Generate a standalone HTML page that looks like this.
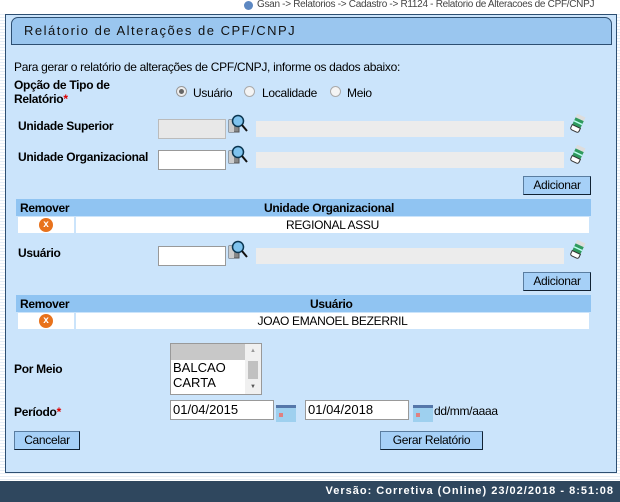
<!DOCTYPE html>
<html><head><meta charset="utf-8"><style>
*{margin:0;padding:0;box-sizing:border-box}
body{width:620px;height:502px;position:relative;overflow:hidden;font-family:"Liberation Sans",Arial,sans-serif;font-size:12px;color:#000;background:#fff repeating-linear-gradient(#fff 0 2px,#e6eef6 2px 3px);}
.a{position:absolute;white-space:nowrap}
.b{font-weight:bold}
.lbl{letter-spacing:-0.3px}
.inp{position:absolute;height:20px;border:1px solid #999;background:#fff}
.ro{position:absolute;height:16px;background:#ececec}
.btn{position:absolute;height:19px;background:#a6d0f7;border:1px solid #5a7da0;border-right-color:#123;border-bottom-color:#123;font-size:12px;text-align:center;line-height:17px;letter-spacing:-0.3px}
.th{position:absolute;background:#90c4f2;height:17px;font-weight:bold;letter-spacing:-0.3px}
.tr{position:absolute;background:#fff;height:16px}
.x{position:absolute;width:14px;height:14px;border-radius:50%;background:#e8721c;color:#fff;font-size:10px;font-weight:bold;text-align:center;line-height:14px}
</style></head><body>
<div class="a" style="left:0;top:0;width:620px;height:12px;background:#fff"></div>
<div class="a" style="left:244px;top:1px;width:9px;height:9px;border-radius:50%;background:#5d88c2"></div>
<div class="a" style="left:257px;top:-1px;font-size:10px;color:#444;letter-spacing:-0.3px">Gsan -&gt; Relatorios -&gt; Cadastro -&gt; R1124 - Relatorio de Alteracoes de CPF/CNPJ</div>
<div class="a" style="left:5px;top:14px;width:612px;height:459px;background:#cbe4fb;border:1px solid #2d4f72"></div>
<div class="a" style="left:11px;top:17px;width:601px;height:28px;background:#9ac6ef;border:1px solid #2d4f72;border-radius:7px 7px 0 0"></div>
<div class="a" style="left:24px;top:23px;font-size:13px;letter-spacing:1.5px;color:#111">Relátorio de Alterações de CPF/CNPJ</div>
<div class="a lbl" style="left:14px;top:60px">Para gerar o relatório de alterações de CPF/CNPJ, informe os dados abaixo:</div>
<div class="a b lbl" style="left:14px;top:78px;line-height:14px">Opção de Tipo de<br>Relatório<span style="color:#d00">*</span></div>
<div class="a" style="left:176px;top:86px;width:11px;height:11px;border-radius:50%;border:1px solid #999;background:#eee"><div style="margin:2px;width:5px;height:5px;border-radius:50%;background:#666"></div></div>
<div class="a lbl" style="left:193px;top:86px">Usuário</div>
<div class="a" style="left:244px;top:86px;width:11px;height:11px;border-radius:50%;border:1px solid #aaa;background:#f4f4f4"></div>
<div class="a lbl" style="left:262px;top:86px">Localidade</div>
<div class="a" style="left:330px;top:86px;width:11px;height:11px;border-radius:50%;border:1px solid #aaa;background:#f4f4f4"></div>
<div class="a lbl" style="left:347px;top:86px">Meio</div>

<svg width="0" height="0" style="position:absolute"><defs>
<g id="mag"><rect x="1" y="6" width="10" height="12" fill="#888" stroke="#555"/><rect x="1" y="6" width="5" height="12" fill="#ccc"/><circle cx="10" cy="7" r="5.5" fill="#7fc3ee" stroke="#0a3550" stroke-width="1.5"/><line x1="14" y1="11" x2="19" y2="17" stroke="#111" stroke-width="2"/></g>
<g id="era"><g transform="rotate(25 9 10)"><rect x="4" y="1" width="9" height="5" fill="#ddd"/><rect x="4" y="5" width="9" height="8" fill="#2f9a5e"/><rect x="4" y="8" width="9" height="1.5" fill="#bfe"/><path d="M4 13h9v3a2 2 0 0 1-2 2h-5a2 2 0 0 1-2-2z" fill="#fff" stroke="#333"/></g></g>
<g id="cal"><rect x="0" y="0" width="20" height="17" fill="#9ed0ef"/><rect x="0" y="0" width="20" height="3" fill="#5577aa"/><rect x="3" y="8" width="4" height="4" fill="#e08080"/></g>
</defs></svg>

<div class="a b lbl" style="left:18px;top:119px">Unidade Superior</div>
<div class="inp" style="left:158px;top:119px;width:68px;background:#e8e8e8;border-color:#bbb"></div>
<svg class="a" style="left:228px;top:114px" width="22" height="22"><use href="#mag"/></svg>
<div class="ro" style="left:256px;top:121px;width:308px"></div>
<svg class="a" style="left:569px;top:114px" width="18" height="22"><use href="#era"/></svg>

<div class="a b lbl" style="left:18px;top:150px">Unidade Organizacional</div>
<div class="inp" style="left:158px;top:150px;width:68px"></div>
<svg class="a" style="left:228px;top:145px" width="22" height="22"><use href="#mag"/></svg>
<div class="ro" style="left:256px;top:152px;width:308px"></div>
<svg class="a" style="left:569px;top:145px" width="18" height="22"><use href="#era"/></svg>

<div class="btn" style="left:523px;top:176px;width:68px">Adicionar</div>
<div class="th" style="left:16px;top:199px;width:575px"><span class="a" style="left:4px;top:2px">Remover</span><span class="a" style="left:248px;top:2px">Unidade Organizacional</span></div>
<div class="tr" style="left:18px;top:217px;width:56px"></div>
<div class="x" style="left:39px;top:218px">x</div>
<div class="tr" style="left:76px;top:217px;width:513px;text-align:center;letter-spacing:-0.3px;line-height:16px">REGIONAL ASSU</div>

<div class="a b lbl" style="left:18px;top:246px">Usuário</div>
<div class="inp" style="left:158px;top:246px;width:68px"></div>
<svg class="a" style="left:228px;top:240px" width="22" height="22"><use href="#mag"/></svg>
<div class="ro" style="left:256px;top:248px;width:308px"></div>
<svg class="a" style="left:569px;top:240px" width="18" height="22"><use href="#era"/></svg>

<div class="btn" style="left:523px;top:272px;width:68px">Adicionar</div>
<div class="th" style="left:16px;top:295px;width:575px"><span class="a" style="left:4px;top:2px">Remover</span><span class="a" style="left:294px;top:2px">Usuário</span></div>
<div class="tr" style="left:18px;top:313px;width:56px"></div>
<div class="x" style="left:39px;top:314px">x</div>
<div class="tr" style="left:76px;top:313px;width:513px;text-align:center;letter-spacing:-0.3px;line-height:16px">JOAO EMANOEL BEZERRIL</div>

<div class="a b lbl" style="left:14px;top:362px">Por Meio</div>
<div class="a" style="left:170px;top:343px;width:92px;height:52px;background:#fff;border:1px solid #999">
<div style="height:16px;background:#c8c8c8;margin-right:16px"></div>
<div style="font-size:13px;line-height:15px;padding-left:2px">BALCAO<br>CARTA</div>
<div class="a" style="right:0;top:0;width:16px;height:50px;background:#f0f0f0"><div style="position:absolute;left:3px;top:17px;width:10px;height:18px;background:#c1c1c1"></div><div style="position:absolute;left:5px;top:4px;font-size:6px;color:#999">▲</div><div style="position:absolute;left:5px;top:40px;font-size:6px;color:#555">▼</div></div>
</div>

<div class="a b lbl" style="left:14px;top:405px">Período<span style="color:#d00">*</span></div>
<div class="inp" style="left:170px;top:400px;width:104px;font-size:13px;padding-left:2px;line-height:18px">01/04/2015</div>
<svg class="a" style="left:276px;top:405px" width="20" height="17"><use href="#cal"/></svg>
<div class="inp" style="left:305px;top:400px;width:104px;font-size:13px;padding-left:2px;line-height:18px">01/04/2018</div>
<svg class="a" style="left:413px;top:405px" width="20" height="17"><use href="#cal"/></svg>
<div class="a lbl" style="left:434px;top:404px">dd/mm/aaaa</div>

<div class="btn" style="left:14px;top:431px;width:66px">Cancelar</div>
<div class="btn" style="left:380px;top:431px;width:103px">Gerar Relatório</div>

<div class="a" style="left:0;top:481px;width:620px;height:21px;background:#2f475e"></div>
<div class="a b" style="right:6px;top:485px;color:#fff;font-size:11px;letter-spacing:1px">Versão: Corretiva (Online) 23/02/2018 - 8:51:08</div>
</body></html>
